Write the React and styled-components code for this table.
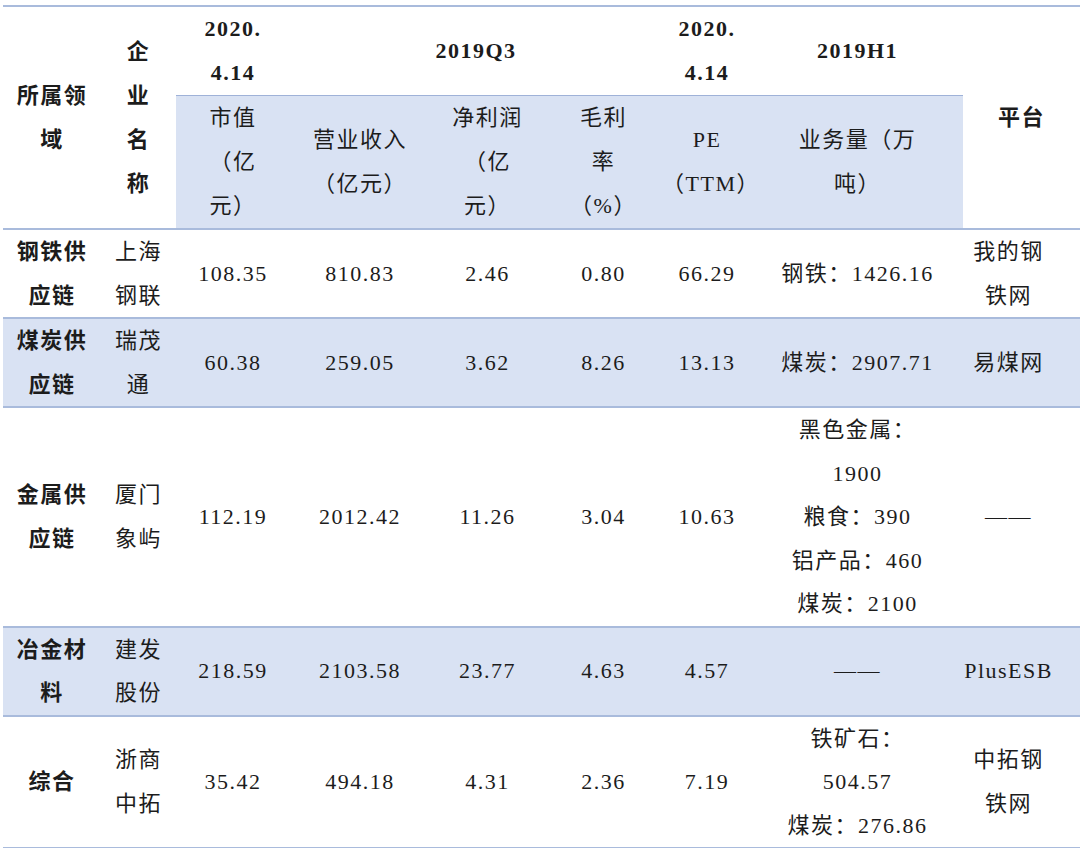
import React from 'react';
import styled, { createGlobalStyle } from 'styled-components';

const GlobalStyle = createGlobalStyle`
    body {
        margin: 0;
        background: #ffffff;
    }
`;

const rows = [
    { field: ['钢铁供', '应链'], name: ['上海', '钢联'], cap: '108.35', rev: '810.83', profit: '2.46', margin: '0.80', pe: '66.29', volume: ['钢铁：1426.16'], site: ['我的钢', '铁网'] },
    { field: ['煤炭供', '应链'], name: ['瑞茂', '通'], cap: '60.38', rev: '259.05', profit: '3.62', margin: '8.26', pe: '13.13', volume: ['煤炭：2907.71'], site: ['易煤网'], tint: true },
    { field: ['金属供', '应链'], name: ['厦门', '象屿'], cap: '112.19', rev: '2012.42', profit: '11.26', margin: '3.04', pe: '10.63', volume: ['黑色金属：', '1900', '粮食：390', '铝产品：460', '煤炭：2100'], site: ['——'] },
    { field: ['冶金材', '料'], name: ['建发', '股份'], cap: '218.59', rev: '2103.58', profit: '23.77', margin: '4.63', pe: '4.57', volume: ['——'], site: ['PlusESB'], tint: true },
    { field: ['综合'], name: ['浙商', '中拓'], cap: '35.42', rev: '494.18', profit: '4.31', margin: '2.36', pe: '7.19', volume: ['铁矿石：', '504.57', '煤炭：276.86'], site: ['中拓钢', '铁网'] },
];

const widths = [98, 75, 114, 140, 115, 117, 90, 211, 117];

function Lines({ items }) {
    return items.map((t, i) => (
        <React.Fragment key={i}>
            {i > 0 && <br />}
            {t}
        </React.Fragment>
    ));
}

export default function App() {
    return (
        <>
            <GlobalStyle />
            <Table>
                <colgroup>
                    {widths.map((w, i) => <col key={i} style={{ width: w }} />)}
                </colgroup>
                <Head>
                    <tr>
                        <HeadCell rowSpan={2}>所属领<br />域</HeadCell>
                        <HeadCell rowSpan={2}>企<br />业<br />名<br />称</HeadCell>
                        <HeadCell $open>2020.<br />4.14</HeadCell>
                        <HeadCell $open colSpan={3}>2019Q3</HeadCell>
                        <HeadCell $open>2020.<br />4.14</HeadCell>
                        <HeadCell $open>2019H1</HeadCell>
                        <HeadCell rowSpan={2}>平台</HeadCell>
                    </tr>
                    <tr>
                        <SubCell>市值<br />（亿<br />元）</SubCell>
                        <SubCell>营业收入<br />（亿元）</SubCell>
                        <SubCell>净利润<br />（亿<br />元）</SubCell>
                        <SubCell>毛利<br />率<br />（%）</SubCell>
                        <SubCell>PE<br />（TTM）</SubCell>
                        <SubCell>业务量（万<br />吨）</SubCell>
                    </tr>
                </Head>
                <Body>
                    {rows.map((r) => (
                        <Row key={r.name.join('')} $tint={r.tint}>
                            <Cell $bold><Lines items={r.field} /></Cell>
                            <Cell><Lines items={r.name} /></Cell>
                            <Cell>{r.cap}</Cell>
                            <Cell>{r.rev}</Cell>
                            <Cell>{r.profit}</Cell>
                            <Cell>{r.margin}</Cell>
                            <Cell>{r.pe}</Cell>
                            <Cell><Lines items={r.volume} /></Cell>
                            <Cell $pr={26}><Lines items={r.site} /></Cell>
                        </Row>
                    ))}
                </Body>
            </Table>
        </>
    );
}

const Table = styled.table`
    width: 1077px;
    margin: 5px 0 0 3px;
    table-layout: fixed;
    border-collapse: collapse;
    font-family: "Liberation Serif", "Noto Sans CJK SC", serif;
    font-size: 22px;
    letter-spacing: 1.5px;
    color: #1c1c1c;
`;

const Head = styled.thead`
    line-height: 44px;

    tr:first-child th {
        border-top: 2px solid #a9bbdc;
    }
`;

const Body = styled.tbody`
    line-height: 43.5px;
`;

const Row = styled.tr`
    background: ${(p) => (p.$tint ? '#d9e2f3' : 'transparent')};
`;

const HeadCell = styled.th`
    padding: 0;
    text-align: center;
    vertical-align: middle;
    font-weight: 700;
    white-space: nowrap;
    border-bottom: ${(p) => (p.$open ? 'none' : '2px solid #a9bbdc')};
`;

const SubCell = styled.td`
    padding: 0;
    text-align: center;
    vertical-align: middle;
    font-weight: 400;
    white-space: nowrap;
    background: #d9e2f3;
    border-top: 1px solid #9fb2d8;
    border-bottom: 2px solid #a9bbdc;
`;

const Cell = styled.td`
    padding: 0 ${(p) => p.$pr || 0}px 0 0;
    text-align: center;
    vertical-align: middle;
    font-weight: ${(p) => (p.$bold ? 700 : 400)};
    white-space: nowrap;
    border-bottom: 2px solid #a9bbdc;
`;
